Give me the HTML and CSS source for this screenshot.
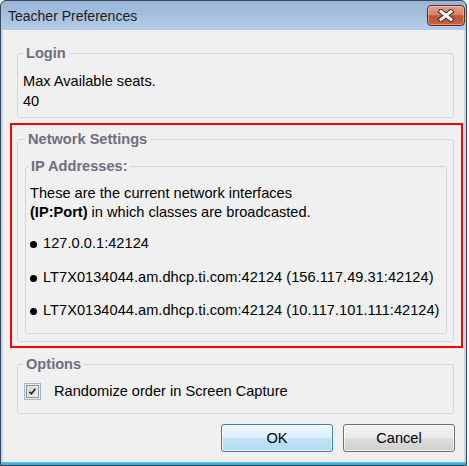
FILE: index.html
```html
<!DOCTYPE html>
<html>
<head>
<meta charset="utf-8">
<title>Teacher Preferences</title>
<link rel="stylesheet" href="styles.css">
</head>
<body>
<div class="window">
  <div class="titlebar">
    <span class="title">Teacher Preferences</span>
    <div class="close">
      <svg width="18" height="13" viewBox="0 0 18 13">
        <path d="M4 2.5 L14 10.5 M14 2.5 L4 10.5" stroke="#4a2a24" stroke-width="5" stroke-linecap="square" fill="none"/>
        <path d="M4 2.5 L14 10.5 M14 2.5 L4 10.5" stroke="#ffffff" stroke-width="3" stroke-linecap="square" fill="none"/>
      </svg>
    </div>
  </div>
  <div class="content">
    <fieldset class="group login">
      <legend>Login</legend>
      <div class="line">Max Available seats.</div>
      <div class="line">40</div>
    </fieldset>

    <div class="highlight">
      <fieldset class="group network">
        <legend>Network Settings</legend>
        <fieldset class="group ip">
          <legend>IP Addresses:</legend>
          <div class="para">These are the current network interfaces</div>
          <div class="para"><b>(IP:Port)</b> in which classes are broadcasted.</div>
          <ul class="addrs">
            <li><span class="dot"></span>127.0.0.1:42124</li>
            <li><span class="dot"></span>LT7X0134044.am.dhcp.ti.com:42124 (156.117.49.31:42124)</li>
            <li><span class="dot"></span>LT7X0134044.am.dhcp.ti.com:42124 (10.117.101.111:42124)</li>
          </ul>
        </fieldset>
      </fieldset>
    </div>

    <fieldset class="group options">
      <legend>Options</legend>
      <div class="check-row">
        <svg class="checkbox" width="17" height="17" viewBox="0 0 17 17">
          <defs>
            <linearGradient id="cbg" x1="0" y1="0" x2="1" y2="1">
              <stop offset="0" stop-color="#cfcfcf"/>
              <stop offset="1" stop-color="#efefef"/>
            </linearGradient>
          </defs>
          <rect x="0.5" y="0.5" width="16" height="16" fill="none" stroke="#3b86c9" stroke-width="1" stroke-dasharray="1 1"/>
          <rect x="2.5" y="2.5" width="12" height="12" fill="url(#cbg)" stroke="#8e8f8f"/>
          <rect x="3.5" y="3.5" width="10" height="10" fill="none" stroke="#f4f4f4" stroke-opacity="0.6"/>
          <path d="M5.5 8.8 L7.4 10.8 L11.4 5.8" stroke="#2b2b2b" stroke-width="1.7" fill="none"/>
        </svg>
        <span>Randomize order in Screen Capture</span>
      </div>
    </fieldset>

    <div class="buttons">
      <button class="btn ok">OK</button>
      <button class="btn cancel">Cancel</button>
    </div>
  </div>
  <div class="frame-bottom"></div>
</div>
</body>
</html>
```

FILE: styles.css
```css
html, body {
  margin: 0;
  padding: 0;
  background: #ffffff;
}

body {
  font-family: "Liberation Sans", Arial, sans-serif;
  color: #000;
}

.window {
  width: 467px;
  height: 466px;
  box-sizing: border-box;
  border: 1px solid #3a4758;
  border-radius: 6px 6px 0 0;
  background: linear-gradient(#98b4d6 0px, #b4cce8 29px, #c3d8ee 29px, #c3d8ee 100%);
  display: flex;
  flex-direction: column;
  overflow: hidden;
}

.titlebar {
  height: 29px;
  flex: none;
  display: flex;
  align-items: flex-start;
  justify-content: space-between;
  padding-left: 7px;
}

.title {
  font-size: 14px;
  line-height: 30px;
  color: #1b1b1b;
}

.close {
  width: 38px;
  height: 21px;
  box-sizing: border-box;
  margin-top: 4px;
  margin-right: 1px;
  border: 1px solid #5b2d25;
  border-radius: 4px;
  background: linear-gradient(#e4a08b 0%, #d9836a 45%, #c4512f 52%, #c9613f 100%);
  box-shadow: inset 0 0 0 1px rgba(255, 255, 255, 0.35);
  display: flex;
  align-items: center;
  justify-content: center;
}

.content {
  margin: 0 2px;
  height: 432px;
  flex: none;
  box-sizing: border-box;
  background: #f0f0f0;
  padding: 15px 1px 0 7px;
  font-size: 14.6px;
}

.frame-bottom {
  flex: none;
  height: 3px;
  background: linear-gradient(#52c3ea, #2fa6d6);
}

.group {
  margin: 0 9px 0 7px;
  border: 1px solid #d3d6dc;
  border-radius: 3px;
  min-width: 0;
}

.group legend {
  font-weight: bold;
  font-size: 14.6px;
  line-height: 17px;
  color: #6e6f80;
  padding: 0 3px;
}

.login {
  padding: 9px 5px 6px 5px;
}

.line {
  line-height: 20px;
}

.highlight {
  margin-top: 5px;
  border: 2px solid #ff0000;
  padding: 6px 7px 4px 5px;
}

.network {
  margin: 0;
  padding: 10px 6px 7px 7px;
}

.ip {
  margin: 0;
  padding: 9px 8px 13px 4px;
}

.ip legend {
  padding: 0 2px;
  margin-left: -1px;
}

.para {
  line-height: 19px;
}

.addrs {
  list-style: none;
  margin: 12px 0 0 0;
  padding: 0;
  display: flex;
  flex-direction: column;
  gap: 14.5px;
}

.addrs li {
  line-height: 19px;
  display: flex;
  align-items: center;
  white-space: nowrap;
  letter-spacing: 0.03px;
}

.dot {
  display: inline-block;
  width: 7px;
  height: 7px;
  border-radius: 50%;
  background: #000;
  margin-right: 6px;
  margin-top: 2px;
  flex: none;
}

.options {
  margin-top: 8px;
  padding: 8px 5px 12px 5px;
}

.check-row {
  display: flex;
  align-items: center;
  height: 20px;
}

.checkbox {
  margin-left: 1px;
  margin-right: 13px;
  flex: none;
}

.buttons {
  margin-top: 10px;
  display: flex;
  justify-content: flex-end;
  gap: 10px;
  padding-right: 8px;
}

.btn {
  width: 112px;
  height: 28px;
  box-sizing: border-box;
  border-radius: 3px;
  font-family: "Liberation Sans", Arial, sans-serif;
  font-size: 14.6px;
  color: #000;
  padding: 0;
}

.ok {
  border: 1px solid #3c7fb1;
  background: linear-gradient(#ecf7fd 0%, #dcf0fb 48%, #c0e3f7 52%, #b2dbf3 100%);
  box-shadow: inset 0 0 0 1px rgba(255, 255, 255, 0.7);
}

.cancel {
  border: 1px solid #707070;
  background: linear-gradient(#f2f2f2 0%, #ebebeb 48%, #dddddd 52%, #cfcfcf 100%);
  box-shadow: inset 0 0 0 1px rgba(255, 255, 255, 0.7);
}
```
